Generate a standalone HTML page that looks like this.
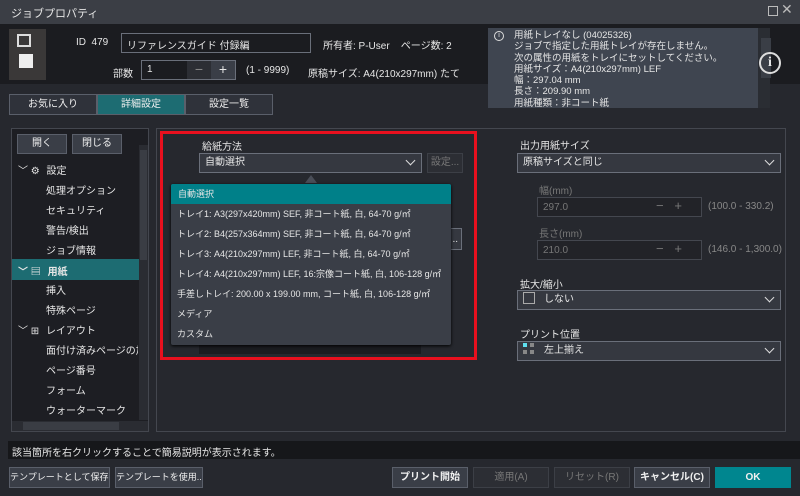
<!DOCTYPE html>
<html><head><meta charset="utf-8"><style>
*{box-sizing:border-box;margin:0;padding:0}
body{width:800px;height:496px;background:#26282e;font-family:"Liberation Sans","Noto Sans CJK JP",sans-serif;font-size:10px;color:#e6e6e6;position:relative;overflow:hidden}
.a{position:absolute;white-space:nowrap}
.btn{position:absolute;background:#3a3e47;border:1px solid #5a5f6a;color:#f0f0f0;text-align:center;font-size:10px;white-space:nowrap;overflow:hidden}
.sel{position:absolute;background:#353840;border:1px solid #6a6f7a;padding-left:5px;font-size:10px;line-height:18px}
.chev{position:absolute;right:7px;top:3px;width:7px;height:7px;border-right:1.5px solid #ddd;border-bottom:1.5px solid #ddd;transform:rotate(45deg)}
.tr{position:absolute;left:46px;font-size:10px;white-space:nowrap}
.dd div{height:20px;padding-left:6px;line-height:20px;white-space:nowrap}
</style></head><body>
<div class="a" style="left:0;top:0;width:800px;height:24px;background:#3b3e45"></div>
<div class="a" style="left:11px;top:5px;font-size:11px">ジョブプロパティ</div>
<div class="a" style="left:768px;top:6px;width:10px;height:10px;border:1px solid #bbb"></div>
<div class="a" style="left:781px;top:1px;font-size:14px;color:#bbb">✕</div>
<div class="a" style="left:0;top:24px;width:800px;height:60px;background:#1b1c20"></div>
<div class="a" style="left:9px;top:29px;width:37px;height:51px;background:#3a3838"><div class="a" style="left:8px;top:5px;width:14px;height:13px;border:2px solid #ddd"></div><div class="a" style="left:10px;top:25px;width:14px;height:14px;background:#eee"></div></div>
<div class="a" style="left:76px;top:37px">ID&nbsp; 479</div>
<div class="a" style="left:121px;top:33px;width:190px;height:20px;border:1px solid #6a6f7a;padding:3px 5px">リファレンスガイド 付録編</div>
<div class="a" style="left:323px;top:37px">所有者: P-User&nbsp;&nbsp;&nbsp; ページ数: 2</div>
<div class="a" style="left:113px;top:65px">部数</div>
<div class="a" style="left:141px;top:60px;width:95px;height:20px;border:1px solid #6a6f7a;background:#1b1c20"><span class="a" style="left:5px;top:3px">1</span><div class="a" style="left:45px;top:0;width:24px;height:18px;background:#2c2e34;text-align:center;color:#888;font-size:14px;line-height:17px">−</div><div class="a" style="left:69px;top:0;width:24px;height:18px;background:#3a3e47;text-align:center;font-size:14px;line-height:17px">+</div></div>
<div class="a" style="left:246px;top:65px">(1 - 9999)</div>
<div class="a" style="left:308px;top:65px">原稿サイズ: A4(210x297mm) たて</div>
<div class="a" style="left:488px;top:28px;width:270px;height:80px;background:#3f4550;padding:2px 0 0 26px;line-height:11.3px;font-size:9.5px;overflow:hidden">用紙トレイなし (04025326)<br>ジョブで指定した用紙トレイが存在しません。<br>次の属性の用紙をトレイにセットしてください。<br>用紙サイズ：A4(210x297mm) LEF<br>幅：297.04 mm<br>長さ：209.90 mm<br>用紙種類：非コート紙</div>
<div class="a" style="left:494px;top:31px;width:10px;height:10px;border:1px solid #ddd;border-radius:50%;font-size:7px;text-align:center;line-height:8px">i</div>
<div class="a" style="left:758px;top:28px;width:12px;height:80px;background:#2a2d33"></div>
<div class="a" style="left:761px;top:38px;width:10px;height:40px;background:#3a3e46"></div>
<div class="a" style="left:759px;top:52px;width:22px;height:22px;border:2px solid #ddd;border-radius:50%;text-align:center;font:bold 14px 'Liberation Serif',serif;line-height:18px">i</div>
<div class="btn" style="left:9px;top:94px;width:88px;height:21px;line-height:19px;background:#2f323a">お気に入り</div>
<div class="btn" style="left:97px;top:94px;width:88px;height:21px;line-height:19px;background:#1d6c72">詳細設定</div>
<div class="btn" style="left:185px;top:94px;width:88px;height:21px;line-height:19px;background:#2f323a">設定一覧</div>
<div class="a" style="left:11px;top:128px;width:138px;height:304px;background:#1d1e23;border:1px solid #44474f"></div>
<div class="btn" style="left:17px;top:134px;width:50px;height:20px;line-height:18px">開く</div>
<div class="btn" style="left:72px;top:134px;width:50px;height:20px;line-height:18px">閉じる</div>
<div class="a" style="left:139px;top:145px;width:9px;height:275px;background:#2a2c32"></div>
<div class="a" style="left:140px;top:150px;width:7px;height:110px;background:#3a3d44"></div>
<div class="a" style="left:12px;top:259px;width:127px;height:21px;background:#1d6c72"></div>
<div class="a" style="left:18px;top:162px;font-size:10px">﹀&nbsp;⚙ <span style="margin-left:4px">設定</span></div>
<div class="tr" style="top:182px">処理オプション</div>
<div class="tr" style="top:202px">セキュリティ</div>
<div class="tr" style="top:222px">警告/検出</div>
<div class="tr" style="top:242px">ジョブ情報</div>
<div class="a" style="left:18px;top:263px;font-weight:bold">﹀&nbsp;▤ <span style="margin-left:4px">用紙</span></div>
<div class="tr" style="top:282px">挿入</div>
<div class="tr" style="top:302px">特殊ページ</div>
<div class="a" style="left:18px;top:322px">﹀&nbsp;⊞ <span style="margin-left:4px">レイアウト</span></div>
<div class="tr" style="top:342px;width:92px;overflow:hidden">面付け済みページの加こ</div>
<div class="tr" style="top:362px">ページ番号</div>
<div class="tr" style="top:382px">フォーム</div>
<div class="tr" style="top:402px">ウォーターマーク</div>
<div class="a" style="left:12px;top:421px;width:136px;height:10px;background:#2a2c32"><div class="a" style="left:11px;top:1px;width:96px;height:8px;background:#3a3d44"></div></div>
<div class="a" style="left:156px;top:128px;width:630px;height:304px;border:1px solid #44474f"></div>
<div class="a" style="left:160px;top:131px;width:317px;height:229px;border:3px solid #e8101e"></div>
<div class="a" style="left:202px;top:138px">給紙方法</div>
<div class="sel" style="left:199px;top:153px;width:223px;height:20px">自動選択<span class="chev"></span></div>
<div class="btn" style="left:427px;top:153px;width:36px;height:20px;line-height:18px;color:#777;background:#2c2e34;border-color:#3c3f46">設定...</div>
<div class="a" style="left:432px;top:228px;width:30px;height:22px;border:1px solid #6a6f7a;background:#353840;text-align:right;padding:5px 3px">..</div>
<div class="a" style="left:199px;top:340px;width:222px;height:14px;background:#1b1c20"></div>
<div class="a" style="left:305px;top:175px;width:0;height:0;border-left:6px solid transparent;border-right:6px solid transparent;border-bottom:8px solid #4a4e58"></div>
<div class="a dd" style="left:171px;top:184px;width:280px;height:161px;background:#3a3e47;border-radius:2px;box-shadow:0 1px 3px #000;font-size:9px;overflow:hidden">
<div style="background:#008089;padding-left:7px">自動選択</div>
<div>トレイ1: A3(297x420mm) SEF, 非コート紙, 白, 64-70 g/㎡</div>
<div>トレイ2: B4(257x364mm) SEF, 非コート紙, 白, 64-70 g/㎡</div>
<div>トレイ3: A4(210x297mm) LEF, 非コート紙, 白, 64-70 g/㎡</div>
<div>トレイ4: A4(210x297mm) LEF, 16:宗像コート紙, 白, 106-128 g/㎡</div>
<div>手差しトレイ: 200.00 x 199.00 mm, コート紙, 白, 106-128 g/㎡</div>
<div>メディア</div>
<div>カスタム</div></div>
<div class="a" style="left:520px;top:137px">出力用紙サイズ</div>
<div class="sel" style="left:517px;top:153px;width:264px;height:20px">原稿サイズと同じ<span class="chev"></span></div>
<div class="a" style="left:539px;top:182px;color:#777">幅(mm)</div>
<div class="a" style="left:537px;top:197px;width:165px;height:20px;border:1px solid #44474f;background:#222328;color:#777;padding:4px 5px">297.0<span class="a" style="left:118px;top:0;font-size:13px">−&nbsp;&nbsp;&nbsp;+</span></div>
<div class="a" style="left:708px;top:201px;color:#888">(100.0 - 330.2)</div>
<div class="a" style="left:539px;top:225px;color:#777">長さ(mm)</div>
<div class="a" style="left:537px;top:240px;width:165px;height:20px;border:1px solid #44474f;background:#222328;color:#777;padding:4px 5px">210.0<span class="a" style="left:118px;top:0;font-size:13px">−&nbsp;&nbsp;&nbsp;+</span></div>
<div class="a" style="left:708px;top:244px;color:#888">(146.0 - 1,300.0)</div>
<div class="a" style="left:520px;top:276px">拡大/縮小</div>
<div class="sel" style="left:517px;top:290px;width:264px;height:20px"><span style="display:inline-block;width:12px;height:12px;border:1px solid #aaa;vertical-align:-2px;margin-right:9px"></span>しない<span class="chev"></span></div>
<div class="a" style="left:520px;top:326px">プリント位置</div>
<div class="sel" style="left:517px;top:341px;width:264px;height:20px"><span style="display:inline-block;width:12px;height:12px;vertical-align:-2px;margin-right:9px;background:linear-gradient(#5ee0f0,#5ee0f0) 0 0/4px 4px no-repeat,linear-gradient(#888,#888) 7px 0/4px 4px no-repeat,linear-gradient(#888,#888) 0 7px/4px 4px no-repeat,linear-gradient(#888,#888) 7px 7px/4px 4px no-repeat"></span>左上揃え<span class="chev"></span></div>
<div class="a" style="left:8px;top:441px;width:792px;height:18px;background:#16171a;padding:3px 4px">該当箇所を右クリックすることで簡易説明が表示されます。</div>
<div class="btn" style="left:9px;top:467px;width:101px;height:21px;line-height:19px;font-size:9px">テンプレートとして保存...</div>
<div class="btn" style="left:115px;top:467px;width:88px;height:21px;line-height:19px;font-size:9px">テンプレートを使用...</div>
<div class="btn" style="left:392px;top:467px;width:76px;height:21px;line-height:19px;font-weight:bold">プリント開始</div>
<div class="btn" style="left:473px;top:467px;width:76px;height:21px;line-height:19px;color:#777;background:#2c2e34;border-color:#3c3f46">適用(A)</div>
<div class="btn" style="left:554px;top:467px;width:76px;height:21px;line-height:19px;color:#777;background:#2c2e34;border-color:#3c3f46">リセット(R)</div>
<div class="btn" style="left:634px;top:467px;width:76px;height:21px;line-height:19px;font-weight:bold">キャンセル(C)</div>
<div class="btn" style="left:715px;top:467px;width:76px;height:21px;line-height:19px;background:#00868f;border-color:#00868f;font-weight:bold">OK</div>
</body></html>
